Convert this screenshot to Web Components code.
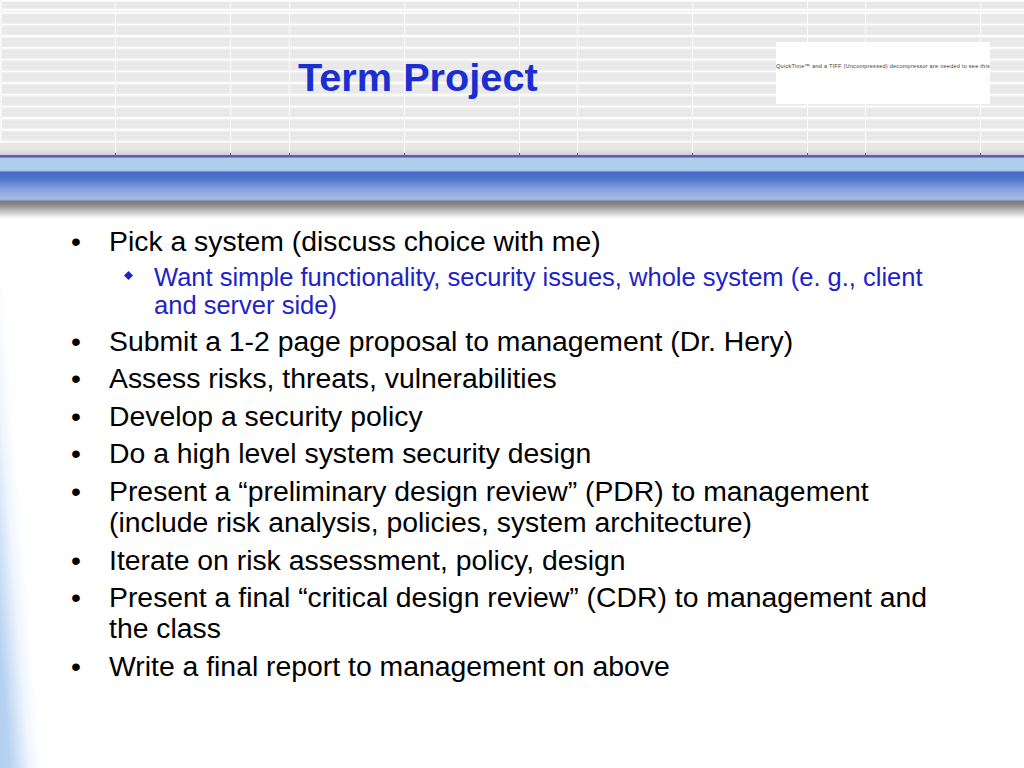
<!DOCTYPE html>
<html><head><meta charset="utf-8"><style>
html,body{margin:0;padding:0;background:#fff}
body{font-family:"Liberation Sans",Arial,sans-serif}
</style></head><body>
<slide-page>
  <slide-header slot="header">
    <span slot="title">Term Project</span>
    <span slot="notice">QuickTime™ and a TIFF (Uncompressed) decompressor are needed to see this picture.</span>
  </slide-header>
  <slide-band slot="band"></slide-band>
  <bullet-item>Pick a system (discuss choice with me)</bullet-item>
  <sub-item>Want simple functionality, security issues, whole system (e. g., client and server side)</sub-item>
  <bullet-item>Submit a 1-2 page proposal to management (Dr. Hery)</bullet-item>
  <bullet-item>Assess risks, threats, vulnerabilities</bullet-item>
  <bullet-item>Develop a security policy</bullet-item>
  <bullet-item>Do a high level system security design</bullet-item>
  <bullet-item>Present a “preliminary design review” (PDR) to management (include risk analysis, policies, system architecture)</bullet-item>
  <bullet-item>Iterate on risk assessment, policy, design</bullet-item>
  <bullet-item>Present a final “critical design review” (CDR) to management and the class</bullet-item>
  <bullet-item>Write a final report to management on above</bullet-item>
</slide-page>
<script>
function def(name, html){
  customElements.define(name, class extends HTMLElement{
    constructor(){super();this.attachShadow({mode:'open'}).innerHTML=html;}
  });
}
def('slide-page',`<style>
:host{display:block;width:1024px;height:768px;overflow:hidden;position:relative;
background:linear-gradient(85.4deg,#b2d0f0 0,#b6d2f1 10px,#d4e4f7 20px,#f0f6fd 30px,#fff 42px)}
main{display:flex;flex-direction:column;padding:5.5px 84px 0 70px}
</style><slot name="header"></slot><slot name="band"></slot><main><slot></slot></main>`);
const lines=[115,230,289,404,519,577,692,807,865,980];
const vbg=lines.map(x=>`linear-gradient(#fbfbfb,#fbfbfb) ${x}px 0/1px 100% no-repeat`).join(',');
const ticks=lines.map(x=>`<i style="left:${x}px"></i>`).join('');
def('slide-header',`<style>
:host{display:block;height:155px;position:relative;box-sizing:border-box;
background:${vbg},
linear-gradient(#e9e8e5 0,#e8e6e4 55%,#d0ccd8 100%) 0 143px/100% 12px no-repeat,
linear-gradient(#f8f8f8,#f8f8f8) 0 0/2px 100% no-repeat,
linear-gradient(#fff,#f4f4f4) 0 0/100% 2px no-repeat,
repeating-linear-gradient(#fdfdfd 0,#fdfdfd 1px,#f2f2f2 1.8px,#e9e9e9 3.2px,#e7e7e7 5.5px,#ececec 6.5px,#e8e8e8 8px,#e9e9e9 10px,#f2f2f2 11.72px) 0 12px;}
.row{display:flex;height:100%;box-sizing:border-box;padding:42px 34px 0 298px;align-items:flex-start}
.t{font:bold 39.7px/1 "Liberation Sans",Arial,sans-serif;color:#1a2fd2;margin-top:16px}
.q{margin-left:auto;width:214px;height:62px;background:#fff;box-sizing:border-box;padding-top:20px;overflow:hidden;white-space:nowrap;
font:5.6px/8px "Liberation Sans",Arial,sans-serif;color:#3c3c3c;letter-spacing:.225px}
i{position:absolute;bottom:0;width:1px;height:2px;background:#5a5a98}
</style><div class="row"><div class="t"><slot name="title"></slot></div><div class="q"><slot name="notice"></slot></div></div>${ticks}`);
def('slide-band',`<style>
:host{display:block;height:65px;background:linear-gradient(#5f5fb0 0,#5a5aa8 2px,#a8c8e8 3px,#b0cdec 4px,#b0cdec 15px,#9dbbe2 16px,#4569c6 17px,#4c72ca 23px,#8aa4de 35px,#a2b8e6 43px,#9cb2e4 45px,#7a7a80 46px,#8a8a8a 50px,#c0c0c0 56px,#f2f2f2 62px,#fff 64px)}
</style>`);
def('bullet-item',`<style>
:host{display:flex;font:28.36px/31px "Liberation Sans",Arial,sans-serif;color:#000;margin-bottom:6.55px}
b{font-weight:normal;flex:0 0 39px;padding-left:1px;box-sizing:border-box}
</style><b>•</b><div><slot></slot></div>`);
def('sub-item',`<style>
:host{display:flex;font:25.53px/28px "Liberation Sans",Arial,sans-serif;color:#1e22c8;margin-bottom:6.5px;margin-left:54px;margin-top:.3px}
svg{flex:0 0 30px;width:30px;height:28px}
</style><svg viewBox="0 0 30 28"><path d="M4.5 8 L9 12.5 L4.5 17 L0 12.5Z" fill="#1e22c8"/></svg><div><slot></slot></div>`);
</script>
</body></html>
